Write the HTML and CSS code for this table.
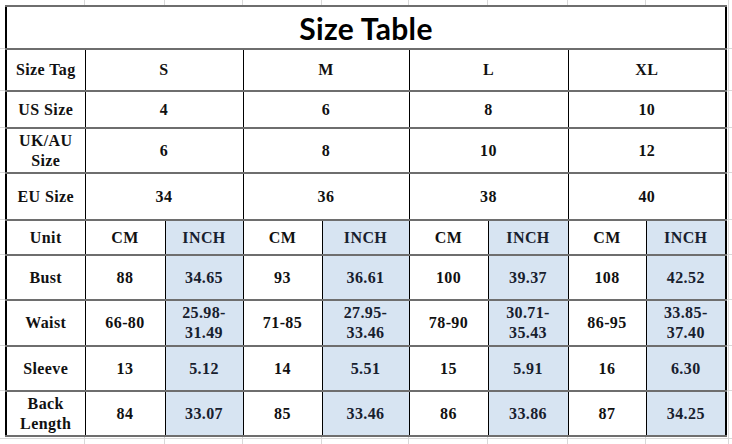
FILE: index.html
```html
<!DOCTYPE html>
<html>
<head>
<meta charset="utf-8">
<link rel="stylesheet" href="styles.css">
</head>
<body>
<div class="sheet">
<table class="size-table">
  <colgroup>
    <col class="c1"><col class="c2"><col class="c3"><col class="c4"><col class="c5"><col class="c6"><col class="c7"><col class="c8"><col class="c9">
  </colgroup>
  <tr class="r-title"><td colspan="9" class="title">Size Table</td></tr>
  <tr class="r-tag"><td>Size Tag</td><td colspan="2">S</td><td colspan="2">M</td><td colspan="2">L</td><td colspan="2">XL</td></tr>
  <tr class="r-us"><td>US Size</td><td colspan="2">4</td><td colspan="2">6</td><td colspan="2">8</td><td colspan="2">10</td></tr>
  <tr class="r-uk"><td>UK/AU<br>Size</td><td colspan="2">6</td><td colspan="2">8</td><td colspan="2">10</td><td colspan="2">12</td></tr>
  <tr class="r-eu"><td>EU Size</td><td colspan="2">34</td><td colspan="2">36</td><td colspan="2">38</td><td colspan="2">40</td></tr>
  <tr class="r-unit"><td>Unit</td><td>CM</td><td class="in">INCH</td><td>CM</td><td class="in">INCH</td><td>CM</td><td class="in">INCH</td><td>CM</td><td class="in">INCH</td></tr>
  <tr class="r-bust"><td>Bust</td><td>88</td><td class="in">34.65</td><td>93</td><td class="in">36.61</td><td>100</td><td class="in">39.37</td><td>108</td><td class="in">42.52</td></tr>
  <tr class="r-waist"><td>Waist</td><td>66-80</td><td class="in">25.98-<br>31.49</td><td>71-85</td><td class="in">27.95-<br>33.46</td><td>78-90</td><td class="in">30.71-<br>35.43</td><td>86-95</td><td class="in">33.85-<br>37.40</td></tr>
  <tr class="r-sleeve"><td>Sleeve</td><td>13</td><td class="in">5.12</td><td>14</td><td class="in">5.51</td><td>15</td><td class="in">5.91</td><td>16</td><td class="in">6.30</td></tr>
  <tr class="r-back"><td>Back<br>Length</td><td>84</td><td class="in">33.07</td><td>85</td><td class="in">33.46</td><td>86</td><td class="in">33.86</td><td>87</td><td class="in">34.25</td></tr>
</table>
</div>
</body>
</html>
```
FILE: styles.css
```css
html, body {
  margin: 0;
  padding: 0;
  background: #ffffff;
}
.sheet {
  width: 732px;
  height: 444px;
  box-sizing: border-box;
  padding: 5px 0 0 5px;
  background:
    linear-gradient(#d8d8d8, #d8d8d8) 84px 0 / 1px 100% no-repeat,
    linear-gradient(#d8d8d8, #d8d8d8) 164px 0 / 1px 100% no-repeat,
    linear-gradient(#d8d8d8, #d8d8d8) 242px 0 / 1px 100% no-repeat,
    linear-gradient(#d8d8d8, #d8d8d8) 321px 0 / 1px 100% no-repeat,
    linear-gradient(#d8d8d8, #d8d8d8) 408px 0 / 1px 100% no-repeat,
    linear-gradient(#d8d8d8, #d8d8d8) 487px 0 / 1px 100% no-repeat,
    linear-gradient(#d8d8d8, #d8d8d8) 567px 0 / 1px 100% no-repeat,
    linear-gradient(#d8d8d8, #d8d8d8) 645px 0 / 1px 100% no-repeat,
    linear-gradient(#d8d8d8, #d8d8d8) 728px 0 / 1px 100% no-repeat,
    linear-gradient(#d8d8d8, #d8d8d8) 0 48px / 100% 1px no-repeat,
    linear-gradient(#d8d8d8, #d8d8d8) 0 90px / 100% 1px no-repeat,
    linear-gradient(#d8d8d8, #d8d8d8) 0 127px / 100% 1px no-repeat,
    linear-gradient(#d8d8d8, #d8d8d8) 0 172px / 100% 1px no-repeat,
    linear-gradient(#d8d8d8, #d8d8d8) 0 219px / 100% 1px no-repeat,
    linear-gradient(#d8d8d8, #d8d8d8) 0 254px / 100% 1px no-repeat,
    linear-gradient(#d8d8d8, #d8d8d8) 0 299px / 100% 1px no-repeat,
    linear-gradient(#d8d8d8, #d8d8d8) 0 345px / 100% 1px no-repeat,
    linear-gradient(#d8d8d8, #d8d8d8) 0 390px / 100% 1px no-repeat,
    linear-gradient(#d8d8d8, #d8d8d8) 0 438px / 100% 1px no-repeat,
    #ffffff;
}
.size-table {
  border-collapse: collapse;
  table-layout: fixed;
  width: 720px;
  background: #ffffff;
  font-family: "Liberation Serif", serif;
  font-weight: bold;
  font-size: 16px;
  letter-spacing: 0.4px;
  color: #111111;
  border-right: 2px solid #000000;
  border-left: 2px solid #000000;
}
.c1 { width: 79px; }
.c2 { width: 80px; }
.c3 { width: 78px; }
.c4 { width: 79px; }
.c5 { width: 87px; }
.c6 { width: 79px; }
.c7 { width: 80px; }
.c8 { width: 78px; }
.c9 { width: 80px; }
.size-table td {
  padding: 0;
  text-align: center;
  vertical-align: middle;
  line-height: 20px;
  border-top: 2px solid #6e6e6e;
  border-bottom: 2px solid #6e6e6e;
  border-left: 1px solid #000000;
  border-right: 1px solid #000000;
  overflow: hidden;
}
.size-table td.in {
  background: #d7e4f2;
  color: #17202e;
}
.size-table td.title {
  font-family: "Lato", "Liberation Sans", sans-serif;
  font-size: 30px;
  font-weight: bold;
  letter-spacing: 0.3px;
  color: #000000;
}
.r-title { height: 43px; }
.r-tag { height: 42px; }
.r-us { height: 37px; }
.r-uk { height: 45px; }
.r-eu { height: 47px; }
.r-unit { height: 35px; }
.r-bust { height: 45px; }
.r-waist { height: 46px; }
.r-sleeve { height: 45px; }
.r-back { height: 45px; }
```
